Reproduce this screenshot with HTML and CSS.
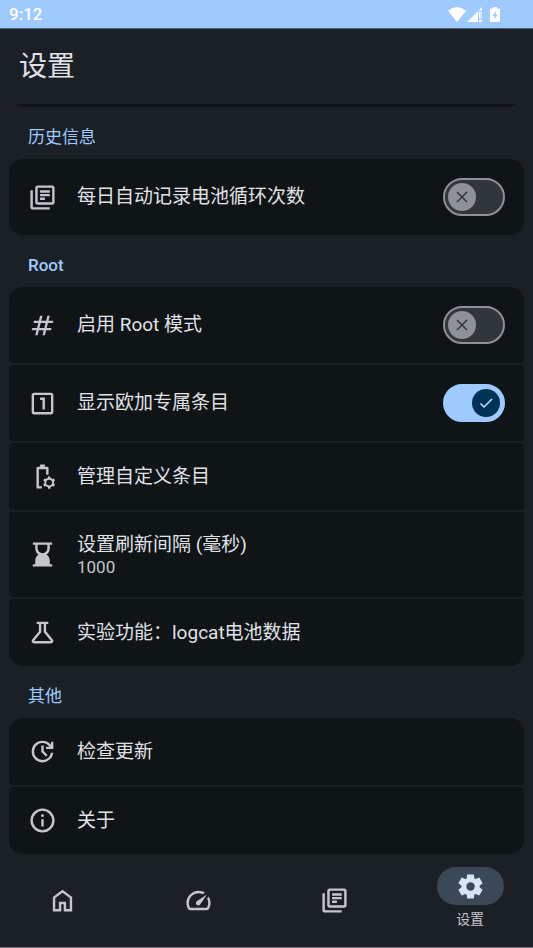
FILE: index.html
```html
<!DOCTYPE html>
<html lang="zh-CN">
<head>
<meta charset="utf-8">
<meta name="viewport" content="width=device-width, initial-scale=1">
<title>设置</title>
<link rel="stylesheet" href="styles.css">
</head>
<body>
<div class="status-bar">
  <span class="clock">9:12</span>
  <div class="status-icons">
    <svg class="wifi" viewBox="0 0 18 15" aria-hidden="true"><path d="M0 3.8Q9-3.6 18 3.8L9 15Z"/></svg>
    <svg class="signal" viewBox="0 0 15 15" aria-hidden="true"><path fill-rule="evenodd" d="M0 15 11 4V15ZM11 4 15 0V3.500H12ZM12 5h3v6.500h-3zM13.500 5.500v5.500h1v-5.500zM12 13h3v2h-3z"/></svg>
    <svg class="battery" viewBox="0 0 10 15" aria-hidden="true"><path fill-rule="evenodd" d="M3 0H7V1.500H9Q10 1.500 10 2.500V14Q10 15 9 15H1Q0 15 0 14V2.500Q0 1.500 1 1.500H3ZM5.800 4 2.500 9H4.600V12.500L7.700 7.600H5.800Z"/></svg>
  </div>
</div>

<header class="app-bar"><h1>设置</h1></header>

<main class="content">
  <div class="scrolled-edge"><div class="scrolled-card"></div></div>

  <section>
    <h2>历史信息</h2>
    <div class="group">
      <label class="row tall">
        <svg class="icon" viewBox="0 0 24 24" aria-hidden="true"><path d="M4 6H2v14c0 1.100.9 2 2 2h14v-2H4V6zm16-4H8c-1.100 0-2 .9-2 2v12c0 1.100.9 2 2 2h12c1.100 0 2-.9 2-2V4c0-1.100-.9-2-2-2zm0 14H8V4h12v12zM10 9h8v2h-8V9zm0 3h4v2h-4v-2zm0-6h8v2h-8V6z"/></svg>
        <span class="title">每日自动记录电池循环次数</span>
        <span class="switch">
          <input type="checkbox" role="switch">
          <svg class="thumb" viewBox="0 0 28 28" aria-hidden="true"><circle cx="14" cy="14" r="14"/><path d="M9 9 19 19M19 9 9 19"/></svg>
        </span>
      </label>
    </div>
  </section>

  <section>
    <h2 lang="en">Root</h2>
    <div class="group">
      <label class="row tall">
        <svg class="icon" viewBox="0 -960 960 960" aria-hidden="true"><path d="m240-160 40-160H120l20-80h160l40-160H180l20-80h160l40-160h80l-40 160h160l40-160h80l-40 160h160l-20 80H660l-40 160h160l-20 80H600l-40 160h-80l40-160H360l-40 160h-80Zm140-240h160l40-160H420l-40 160Z"/></svg>
        <span class="title">启用 Root 模式</span>
        <span class="switch">
          <input type="checkbox" role="switch">
          <svg class="thumb" viewBox="0 0 28 28" aria-hidden="true"><circle cx="14" cy="14" r="14"/><path d="M9 9 19 19M19 9 9 19"/></svg>
        </span>
      </label>
      <label class="row tall">
        <svg class="icon" viewBox="0 0 24 24" aria-hidden="true"><path d="M19 3H5c-1.100 0-2 .9-2 2v14c0 1.100.9 2 2 2h14c1.100 0 2-.9 2-2V5c0-1.100-.9-2-2-2zm0 16H5V5h14v14zM12 17h2V7h-4v2h2v8z"/></svg>
        <span class="title">显示欧加专属条目</span>
        <span class="switch">
          <input type="checkbox" role="switch" checked>
          <svg class="thumb" viewBox="0 0 28 28" aria-hidden="true"><circle cx="14" cy="14" r="14"/><path d="M8.500 14.500 12 18 20 10"/></svg>
        </span>
      </label>
      <button type="button" class="row">
        <svg class="icon" viewBox="0 0 24 24" aria-hidden="true">
          <path d="M11.500 22H8Q7 22 7 21V5Q7 4 8 4H10V2H14V4H16Q17 4 17 5V10.500H15V6H9V20H11.500Z"/>
          <circle class="line" cx="17.500" cy="17" r="3.200"/>
          <path d="M16.500 11.900h2v2h-2zM16.500 20.100h2v2h-2z"/>
          <path transform="rotate(60 17.500 17)" d="M16.500 11.900h2v2h-2zM16.500 20.100h2v2h-2z"/>
          <path transform="rotate(120 17.500 17)" d="M16.500 11.900h2v2h-2zM16.500 20.100h2v2h-2z"/>
        </svg>
        <span class="title">管理自定义条目</span>
      </button>
      <button type="button" class="row detailed">
        <svg class="icon" viewBox="0 -960 960 960" aria-hidden="true"><path d="M480-520q66 0 113-47t47-113v-120H320v120q0 66 47 113t113 47ZM160-80v-80h80v-120q0-61 28.500-114.500T348-480q-51-32-79.500-85.500T240-680v-120h-80v-80h640v80h-80v120q0 61-28.500 114.500T612-480q51 32 79.500 85.500T720-280v120h80v80H160Z"/></svg>
        <span class="text">
          <span class="title">设置刷新间隔 (毫秒)</span>
          <span class="value">1000</span>
        </span>
      </button>
      <button type="button" class="row">
        <svg class="icon" viewBox="0 -960 960 960" aria-hidden="true"><path d="M200-120q-51 0-72.500-45.500T138-250l222-270v-240h-40q-17 0-28.500-11.500T280-800q0-17 11.500-28.500T320-840h320q17 0 28.500 11.500T680-800q0 17-11.500 28.500T640-760h-40v240l222 270q32 39 10.500 84.500T760-120H200Zm0-80h560L520-492v-268h-80v268L200-200Z"/></svg>
        <span class="title">实验功能：logcat电池数据</span>
      </button>
    </div>
  </section>

  <section>
    <h2>其他</h2>
    <div class="group">
      <button type="button" class="row">
        <svg class="icon" viewBox="0 -960 960 960" aria-hidden="true"><path d="M480-120q-75 0-140.500-28.500t-114-77q-48.500-48.500-77-114T120-480q0-75 28.500-140.500t77-114q48.500-48.500 114-77T480-840q82 0 155.500 35T760-706v-94h80v240H600v-80h110q-41-56-101-88t-129-32q-117 0-198.500 81.500T200-480q0 117 81.500 198.500T480-200q105 0 183.500-68T756-440h82q-15 137-117.500 228.500T480-120Zm112-192L440-464v-216h80v184l128 128-56 56Z"/></svg>
        <span class="title">检查更新</span>
      </button>
      <button type="button" class="row">
        <svg class="icon" viewBox="0 0 24 24" aria-hidden="true"><circle class="ring" cx="12" cy="12" r="9"/><path d="M11 11h2v6h-2z"/><circle cx="12" cy="8" r="1.200"/></svg>
        <span class="title">关于</span>
      </button>
    </div>
  </section>
</main>

<nav class="nav-bar">
  <a href="#home" aria-label="主页"><svg class="icon" viewBox="0 -960 960 960" aria-hidden="true"><path d="M240-200h120v-240h240v240h120v-360L480-740 240-560v360Zm-80 80v-480l320-240 320 240v480H520v-240h-80v240H160Z"/></svg></a>
  <a href="#speed" aria-label="性能"><svg class="icon" viewBox="0 -960 960 960" aria-hidden="true"><path d="M418-340q24 24 62 23.500t56-27.500l224-336-336 224q-27 18-28.500 55t22.500 61Zm62-460q59 0 113.500 16.500T696-734l-76 48q-33-17-68.500-25.500T480-720q-133 0-226.500 93.500T160-400q0 42 11.500 83t32.500 77h552q23-38 33.500-79t10.500-85q0-36-8.500-70T766-540l48-76q30 47 47.500 100T880-406q1 57-13 109t-41 99q-11 18-30 28t-40 10H204q-21 0-40-10t-30-28q-26-45-40-95.500T80-400q0-83 31.500-155.500t86-127Q252-737 325-768.500T480-800Z"/></svg></a>
  <a href="#history" aria-label="历史"><svg class="icon" viewBox="0 0 24 24" aria-hidden="true"><path d="M4 6H2v14c0 1.100.9 2 2 2h14v-2H4V6zm16-4H8c-1.100 0-2 .9-2 2v12c0 1.100.9 2 2 2h12c1.100 0 2-.9 2-2V4c0-1.100-.9-2-2-2zm0 14H8V4h12v12zM10 9h8v2h-8V9zm0 3h4v2h-4v-2zm0-6h8v2h-8V6z"/></svg></a>
  <a href="#settings" class="active" aria-current="page">
    <span class="pill"><svg class="icon" viewBox="0 -960 960 960" aria-hidden="true"><path d="m370-80-16-128q-13-5-24.500-12T307-235l-119 50L78-375l103-78q-1-7-1-13.500v-27q0-6.500 1-13.500L78-585l110-190 119 50q11-8 23-15t24-12l16-128h220l16 128q13 5 24.500 12t22.500 15l119-50 110 190-103 78q1 7 1 13.500v27q0 6.500-2 13.500l103 78-110 190-118-50q-11 8-23 15t-24 12L590-80H370Zm112-260q58 0 99-41t41-99q0-58-41-99t-99-41q-59 0-99.500 41T342-480q0 58 40.500 99t99.500 41Z"/></svg></span>
    <span>设置</span>
  </a>
</nav>
</body>
</html>
```
FILE: styles.css
```css
:root {
  --surface: #1b2026;
  --card: #0f1417;
  --text: #e0e2e8;
  --muted: #c3c6cf;
  --accent: #9ecaff;
  --outline: #8d9199;
}

* {
  box-sizing: border-box;
}

body {
  margin: 0;
  min-height: 100vh;
  display: flex;
  flex-direction: column;
  background: var(--surface);
  color: var(--text);
  font-family: Roboto, "Noto Sans CJK SC", sans-serif;
}

.status-bar {
  display: flex;
  justify-content: space-between;
  align-items: center;
  height: 29px;
  padding: 0 33px 0 9px;
  border-bottom: 1px solid #4b6078;
  background: var(--accent);
  color: #fff;
}

.clock {
  font-size: 17px;
  font-weight: 500;
  line-height: 28px;
}

.status-icons {
  display: flex;
  align-items: center;
  fill: currentColor;
}

.wifi {
  width: 18px;
  height: 15px;
}

.signal {
  width: 15px;
  height: 15px;
  margin: 0 8px 0 1px;
}

.battery {
  width: 10px;
  height: 15px;
}

.app-bar {
  display: flex;
  align-items: center;
  height: 75px;
  padding: 0 19px;
}

h1 {
  margin: 0;
  font-size: 28px;
  font-weight: 400;
  line-height: 38px;
}

.content {
  flex: 1;
  padding: 0 9px;
}

/* Lower edge of the card that has scrolled under the app bar */
.scrolled-edge {
  display: flex;
  align-items: flex-end;
  height: 3px;
  overflow: hidden;
}

.scrolled-card {
  flex: 1;
  flex-shrink: 0;
  height: 40px;
  border-radius: 16px;
  background: var(--card);
}

h2 {
  margin: 0;
  padding: 18px 19px 10px;
  color: var(--accent);
  font-size: 17px;
  font-weight: 500;
  line-height: 24px;
}

h2:lang(zh) {
  font-weight: 400;
}

.group {
  display: flex;
  flex-direction: column;
  gap: 2px;
  border-radius: 14px;
  overflow: hidden;
}

.row {
  display: flex;
  align-items: center;
  gap: 20px;
  width: 100%;
  min-height: 67px;
  padding: 0 19px;
  border: 0;
  border-radius: 4px;
  background: var(--card);
  color: inherit;
  font: inherit;
  text-align: left;
  cursor: pointer;
}

.row.tall {
  min-height: 76px;
}

.row.detailed {
  min-height: 85px;
}

.icon {
  flex: none;
  width: 29px;
  height: 29px;
  fill: var(--muted);
}

.icon .line,
.icon .ring {
  fill: none;
  stroke: var(--muted);
  stroke-width: 1.600;
}

.icon .ring {
  stroke-width: 2;
}

.title {
  flex: 1;
  font-size: 19px;
  line-height: 24px;
}

.text {
  display: flex;
  flex-direction: column;
}

.value {
  color: var(--muted);
  font-size: 17px;
  line-height: 20px;
}

.switch {
  display: grid;
  align-items: center;
}

.switch > * {
  grid-area: 1 / 1;
}

.switch input {
  appearance: none;
  width: 62px;
  height: 38px;
  margin: 0;
  border: 2px solid var(--outline);
  border-radius: 19px;
  background: #31353c;
}

.switch input:checked {
  border-color: var(--accent);
  background: var(--accent);
}

.thumb {
  width: 28px;
  height: 28px;
  margin: 0 5px;
  fill: var(--outline);
  pointer-events: none;
}

.thumb path {
  fill: none;
  stroke: #31353c;
  stroke-width: 1.500;
}

input:checked + .thumb {
  justify-self: end;
  fill: #003258;
}

input:checked + .thumb path {
  stroke: #d1e4ff;
}

.nav-bar {
  display: grid;
  grid-template-columns: repeat(4, 1fr);
  gap: 10px;
  height: 94px;
  border-bottom: 1px solid #6c6f74;
}

.nav-bar a {
  display: flex;
  flex-direction: column;
  align-items: center;
  justify-content: center;
  color: var(--muted);
  font-size: 14px;
  line-height: 20px;
  text-decoration: none;
}

.nav-bar a.active {
  justify-content: flex-start;
  gap: 4px;
  padding-top: 13px;
}

.pill {
  display: grid;
  place-items: center;
  width: 67px;
  height: 38px;
  border-radius: 19px;
  background: #3c4858;
}

.pill .icon {
  fill: #d7e3f8;
}
```
